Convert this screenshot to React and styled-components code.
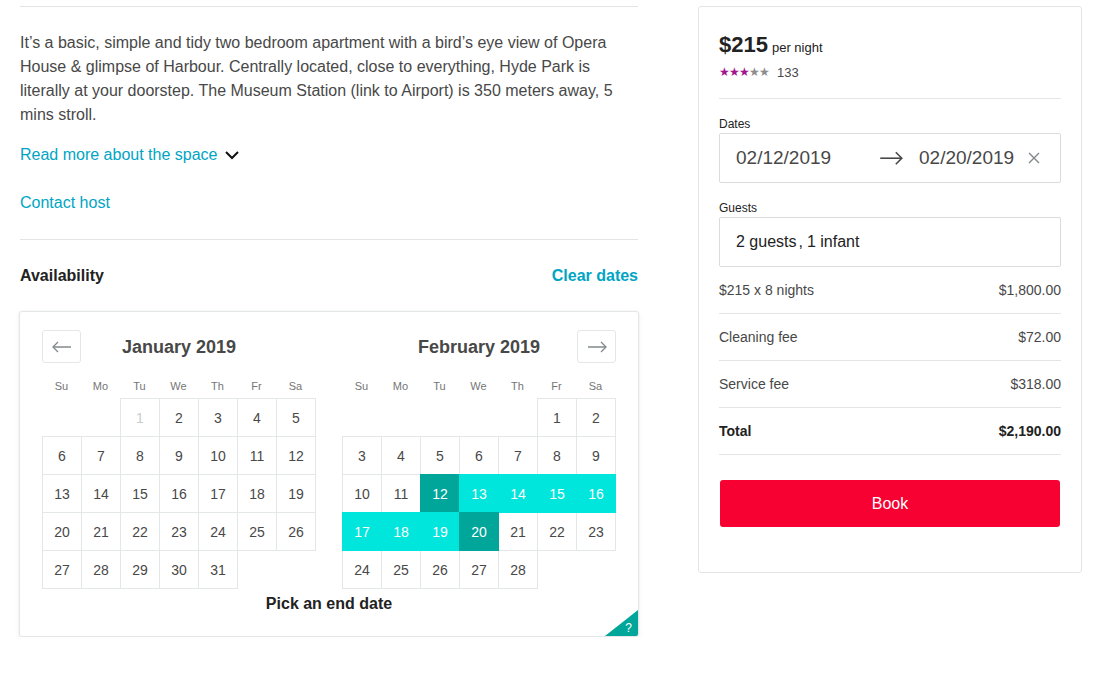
import React from "react";
import styled, { createGlobalStyle } from "styled-components";

const Global = createGlobalStyle`
  html, body { margin: 0; padding: 0; background: #fff; }
  body { font-family: "Liberation Sans", Arial, sans-serif; color: #484848; }
  * { box-sizing: border-box; }
`;

const Page = styled.div`
  display: flex;
  align-items: flex-start;
  gap: 60px;
  padding: 6px 0 0 20px;
`;

const Left = styled.div`
  width: 618px;
  display: flex;
  flex-direction: column;
`;

const Rule = styled.div`
  height: 1px;
  background: #e4e4e4;
  margin: ${(p) => p.$m || "0"};
`;

const Paragraph = styled.p`
  margin: 24px 0 0;
  font-size: 16px;
  line-height: 24px;
  color: #484848;
`;

const LinkRow = styled.div`
  display: flex;
  align-items: center;
  gap: 8px;
  margin-top: ${(p) => p.$mt}px;
  font-size: 16px;
  line-height: 22px;
  color: #00a5c4;
`;

const Heading = styled.div`
  display: flex;
  justify-content: space-between;
  align-items: center;
  margin-top: 25px;
  font-size: 16px;
  line-height: 22px;
  font-weight: bold;
`;

const HeadTitle = styled.span`
  color: #222;
`;

const ClearLink = styled.span`
  color: #00a5c4;
`;

const Calendar = styled.div`
  position: relative;
  margin-top: 24px;
  width: 620px;
  margin-left: -1px;
  border: 1px solid #e4e7e7;
  border-radius: 3px;
  box-shadow: 0 2px 6px rgba(0, 0, 0, 0.05), 0 0 0 1px rgba(0, 0, 0, 0.02);
  padding: 18px 9px 22px 22px;
  background: #fff;
  overflow: hidden;
`;

const Months = styled.div`
  display: flex;
  gap: 27px;
`;

const Month = styled.div`
  width: 273px;
`;

const MonthHead = styled.div`
  display: grid;
  grid-template-columns: 39px 1fr 39px;
  align-items: center;
  height: 33px;
`;

const NavButton = styled.div`
  width: 39px;
  height: 33px;
  border: 1px solid #e4e7e7;
  border-radius: 3px;
  display: flex;
  align-items: center;
  justify-content: center;
  grid-column: ${(p) => p.$col};
  grid-row: 1;
  margin-left: ${(p) => (p.$col === 3 ? "1px" : "0")};
`;

const MonthTitle = styled.div`
  grid-column: 2;
  grid-row: 1;
  text-align: center;
  font-size: 18px;
  font-weight: bold;
  color: #484848;
  padding-top: 2px;
  padding-left: 1px;
`;

const WeekHead = styled.div`
  display: grid;
  grid-template-columns: repeat(7, 39px);
  margin-top: 16px;
  font-size: 11px;
  line-height: 14px;
  color: #757575;
  text-align: center;
`;

const Grid = styled.div`
  display: grid;
  grid-template-columns: repeat(7, 39px);
  grid-auto-rows: 38px;
  margin-top: 5px;
`;

const Cell = styled.div`
  width: 40px;
  height: 39px;
  display: flex;
  align-items: center;
  justify-content: center;
  font-size: 14px;
  border: 1px solid
    ${(p) =>
      p.$empty ? "transparent" : p.$state === "sel" ? "#00a699" : p.$state === "span" ? "#00e6dc" : "#e4e7e7"};
  background: ${(p) => (p.$state === "sel" ? "#00a699" : p.$state === "span" ? "#00e6dc" : "#fff")};
  color: ${(p) => (p.$state ? "#fff" : p.$blocked ? "#cacccd" : "#484848")};
  position: relative;
  z-index: ${(p) => (p.$state ? 1 : 0)};
`;

const Caption = styled.div`
  text-align: center;
  margin-top: 6px;
  margin-right: 13px;
  font-size: 16px;
  line-height: 20px;
  font-weight: bold;
  color: #222;
`;

const Corner = styled.div`
  position: absolute;
  right: 0;
  bottom: 0;
  width: 0;
  height: 0;
  border-top: 26px solid transparent;
  border-right: 33px solid #00a699;
`;

const CornerMark = styled.span`
  position: absolute;
  right: 6px;
  bottom: 1px;
  color: #fff;
  font-size: 12px;
  line-height: 14px;
`;

const Card = styled.div`
  width: 384px;
  border: 1px solid #e4e4e4;
  border-radius: 3px;
  padding: 24px 20px 45px;
  display: flex;
  flex-direction: column;
`;

const PriceLine = styled.div`
  display: flex;
  align-items: baseline;
  gap: 4px;
  line-height: 28px;
`;

const Price = styled.span`
  font-size: 22px;
  font-weight: bold;
  color: #222;
`;

const PerNight = styled.span`
  font-size: 13px;
  color: #222;
`;

const RatingLine = styled.div`
  display: flex;
  align-items: center;
  margin-top: 2px;
  height: 16px;
  font-size: 13px;
  color: #484848;
`;

const Stars = styled.span`
  font-size: 12px;
  letter-spacing: -1px;
  color: ${(p) => p.$c};
`;

const Count = styled.span`
  margin-left: 8px;
`;

const Label = styled.div`
  font-size: 12px;
  line-height: 16px;
  margin-top: ${(p) => p.$mt}px;
  color: #222;
`;

const InputBox = styled.div`
  margin-top: 1px;
  height: 50px;
  border: 1px solid #dbdbdb;
  border-radius: 2px;
  display: flex;
  align-items: center;
  padding-left: 16px;
`;

const DateText = styled.span`
  font-size: 19px;
  color: #484848;
  width: ${(p) => (p.$w ? `${p.$w}px` : "auto")};
`;

const ArrowWrap = styled.span`
  display: flex;
  width: 24px;
  margin-right: 16px;
`;

const ClearWrap = styled.span`
  display: flex;
  margin-left: 14px;
`;

const GuestText = styled.span`
  font-size: 16px;
  color: #222;
`;

const Comma = styled.span`
  margin-left: 2px;
  margin-right: 4px;
`;

const Row = styled.div`
  display: flex;
  justify-content: space-between;
  padding: 12px 0;
  line-height: 22px;
  font-size: 14px;
  border-bottom: 1px solid #e4e4e4;
  font-weight: ${(p) => (p.$bold ? "bold" : "normal")};
  color: ${(p) => (p.$bold ? "#222" : "#484848")};
`;

const BookButton = styled.button`
  margin: 25px 1px 0;
  height: 47px;
  border: none;
  border-radius: 3px;
  background: #f70032;
  color: #fff;
  font-family: inherit;
  font-size: 16px;
`;

const Arrow = ({ dir, color = "#82888a", size = 20 }) => (
  <svg width={size} height={size * 0.6} viewBox="0 0 20 12" fill="none" stroke={color} strokeWidth="1.3">
    {dir === "left" ? (
      <>
        <path d="M1 6h18" />
        <path d="M6 1L1 6l5 5" />
      </>
    ) : (
      <>
        <path d="M1 6h18" />
        <path d="M14 1l5 5-5 5" />
      </>
    )}
  </svg>
);

const Chevron = () => (
  <svg width="14" height="9" viewBox="0 0 14 9" fill="none" stroke="#111" strokeWidth="2">
    <path d="M1 1l6 6 6-6" />
  </svg>
);

const CloseX = () => (
  <svg width="12" height="12" viewBox="0 0 12 12" stroke="#82888a" strokeWidth="1.4">
    <path d="M1 1l10 10M11 1L1 11" />
  </svg>
);

const DAYS = ["Su", "Mo", "Tu", "We", "Th", "Fr", "Sa"];

function MonthView({ title, offset, count, nav, navCol, stateOf, blocked = [] }) {
  const cells = [];
  for (let i = 0; i < offset; i++) cells.push(<Cell key={`e${i}`} $empty />);
  for (let d = 1; d <= count; d++)
    cells.push(
      <Cell key={d} $state={stateOf ? stateOf(d) : undefined} $blocked={blocked.includes(d)}>
        {d}
      </Cell>
    );
  return (
    <Month>
      <MonthHead>
        <NavButton $col={navCol}>
          <Arrow dir={nav} />
        </NavButton>
        <MonthTitle>{title}</MonthTitle>
      </MonthHead>
      <WeekHead>
        {DAYS.map((d) => (
          <span key={d}>{d}</span>
        ))}
      </WeekHead>
      <Grid>{cells}</Grid>
    </Month>
  );
}

const febState = (d) => (d === 12 || d === 20 ? "sel" : d > 12 && d < 20 ? "span" : undefined);

export default function App() {
  return (
    <>
      <Global />
      <Page>
        <Left>
          <Rule />
          <Paragraph>
            It’s a basic, simple and tidy two bedroom apartment with a bird’s eye view of Opera House &amp; glimpse of
            Harbour. Centrally located, close to everything, Hyde Park is literally at your doorstep. The Museum Station
            (link to Airport) is 350 meters away, 5 mins stroll.
          </Paragraph>
          <LinkRow $mt={17}>
            Read more about the space <Chevron />
          </LinkRow>
          <LinkRow $mt={26}>Contact host</LinkRow>
          <Rule $m="25px 0 0" />
          <Heading>
            <HeadTitle>Availability</HeadTitle>
            <ClearLink>Clear dates</ClearLink>
          </Heading>
          <Calendar>
            <Months>
              <MonthView title="January 2019" offset={2} count={31} nav="left" navCol={1} blocked={[1]} />
              <MonthView title="February 2019" offset={5} count={28} nav="right" navCol={3} stateOf={febState} />
            </Months>
            <Caption>Pick an end date</Caption>
            <Corner />
            <CornerMark>?</CornerMark>
          </Calendar>
        </Left>
        <Card>
          <PriceLine>
            <Price>$215</Price>
            <PerNight>per night</PerNight>
          </PriceLine>
          <RatingLine>
            <Stars $c="#a0148e">★★★</Stars>
            <Stars $c="#8c8c8c">★★</Stars>
            <Count>133</Count>
          </RatingLine>
          <Rule $m="18px 0 0" />
          <Label $mt={17}>Dates</Label>
          <InputBox>
            <DateText $w={143}>02/12/2019</DateText>
            <ArrowWrap>
              <Arrow dir="right" color="#484848" size={24} />
            </ArrowWrap>
            <DateText>02/20/2019</DateText>
            <ClearWrap>
              <CloseX />
            </ClearWrap>
          </InputBox>
          <Label $mt={17}>Guests</Label>
          <InputBox>
            <GuestText>
              2 guests<Comma>,</Comma>1 infant
            </GuestText>
          </InputBox>
          <Row>
            <span>$215 x 8 nights</span>
            <span>$1,800.00</span>
          </Row>
          <Row>
            <span>Cleaning fee</span>
            <span>$72.00</span>
          </Row>
          <Row>
            <span>Service fee</span>
            <span>$318.00</span>
          </Row>
          <Row $bold>
            <span>Total</span>
            <span>$2,190.00</span>
          </Row>
          <BookButton>Book</BookButton>
        </Card>
      </Page>
    </>
  );
}
